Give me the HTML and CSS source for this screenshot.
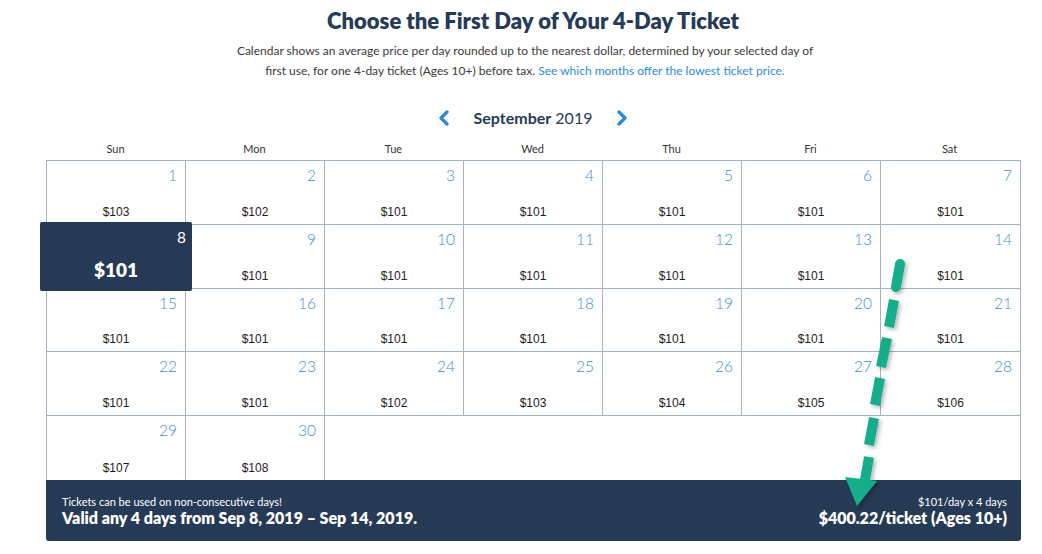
FILE: index.html
```html
<!DOCTYPE html>
<html lang="en">
<head>
<meta charset="utf-8">
<title>Choose the First Day of Your 4-Day Ticket</title>
<link rel="stylesheet" href="styles.css">
</head>
<body>
<main class="page">
  <h1 class="title">Choose the First Day of Your 4-Day Ticket</h1>
  <p class="intro"><span class="intro-line">Calendar shows an average price per day rounded up to the nearest dollar, determined by your selected day of</span><span class="intro-line">first use, for one 4-day ticket (Ages 10+) before tax. <a class="link" href="#">See which months offer the lowest ticket price.</a></span></p>

  <div class="month-nav">
    <svg class="chev" width="12" height="16" viewBox="0 0 12 16"><path d="M9 2 L3 8 L9 14" fill="none" stroke="#2a8ad6" stroke-width="3.2" stroke-linecap="round" stroke-linejoin="round"/></svg>
    <div class="month"><span class="month-name">September</span> 2019</div>
    <svg class="chev" width="12" height="16" viewBox="0 0 12 16"><path d="M3 2 L9 8 L3 14" fill="none" stroke="#2a8ad6" stroke-width="3.2" stroke-linecap="round" stroke-linejoin="round"/></svg>
  </div>

  <div class="weekdays">
    <div>Sun</div><div>Mon</div><div>Tue</div><div>Wed</div><div>Thu</div><div>Fri</div><div>Sat</div>
  </div>

  <div class="calendar">
    <div class="cell"><span class="num">1</span><span class="price">$103</span></div>
    <div class="cell"><span class="num">2</span><span class="price">$102</span></div>
    <div class="cell"><span class="num">3</span><span class="price">$101</span></div>
    <div class="cell"><span class="num">4</span><span class="price">$101</span></div>
    <div class="cell"><span class="num">5</span><span class="price">$101</span></div>
    <div class="cell"><span class="num">6</span><span class="price">$101</span></div>
    <div class="cell last-col"><span class="num">7</span><span class="price">$101</span></div>

    <div class="cell selected-cell"><div class="selected"><span class="num">8</span><span class="price">$101</span></div></div>
    <div class="cell"><span class="num">9</span><span class="price">$101</span></div>
    <div class="cell"><span class="num">10</span><span class="price">$101</span></div>
    <div class="cell"><span class="num">11</span><span class="price">$101</span></div>
    <div class="cell"><span class="num">12</span><span class="price">$101</span></div>
    <div class="cell"><span class="num">13</span><span class="price">$101</span></div>
    <div class="cell last-col"><span class="num">14</span><span class="price">$101</span></div>

    <div class="cell"><span class="num">15</span><span class="price">$101</span></div>
    <div class="cell"><span class="num">16</span><span class="price">$101</span></div>
    <div class="cell"><span class="num">17</span><span class="price">$101</span></div>
    <div class="cell"><span class="num">18</span><span class="price">$101</span></div>
    <div class="cell"><span class="num">19</span><span class="price">$101</span></div>
    <div class="cell"><span class="num">20</span><span class="price">$101</span></div>
    <div class="cell last-col"><span class="num">21</span><span class="price">$101</span></div>

    <div class="cell"><span class="num">22</span><span class="price">$101</span></div>
    <div class="cell"><span class="num">23</span><span class="price">$101</span></div>
    <div class="cell"><span class="num">24</span><span class="price">$102</span></div>
    <div class="cell"><span class="num">25</span><span class="price">$103</span></div>
    <div class="cell"><span class="num">26</span><span class="price">$104</span></div>
    <div class="cell"><span class="num">27</span><span class="price">$105</span></div>
    <div class="cell last-col"><span class="num">28</span><span class="price">$106</span></div>

    <div class="cell last-row"><span class="num">29</span><span class="price">$107</span></div>
    <div class="cell last-row"><span class="num">30</span><span class="price">$108</span></div>
  </div>

  <footer class="summary">
    <div class="summary-left">
      <div class="small">Tickets can be used on non-consecutive days!</div>
      <div class="big">Valid any 4 days from Sep 8, 2019 – Sep 14, 2019.</div>
    </div>
    <div class="summary-right">
      <div class="small">$101/day x 4 days</div>
      <div class="big">$400.22/ticket (Ages 10+)</div>
    </div>
  </footer>
</main>

<svg class="arrow" width="1042" height="554" viewBox="0 0 1042 554">
  <defs>
    <filter id="sh" x="-50%" y="-10%" width="200%" height="120%">
      <feDropShadow dx="2" dy="2" stdDeviation="2" flood-color="#000" flood-opacity="0.3"/>
    </filter>
  </defs>
  <g filter="url(#sh)" fill="#13ad8b" stroke="none">
    <line x1="900" y1="264" x2="896" y2="287" stroke="#13ad8b" stroke-width="10" stroke-linecap="round"/>
    <line x1="894" y1="300" x2="889" y2="327" stroke="#13ad8b" stroke-width="10"/>
    <line x1="887" y1="338" x2="881" y2="367" stroke="#13ad8b" stroke-width="10"/>
    <line x1="880" y1="378" x2="875" y2="405" stroke="#13ad8b" stroke-width="10"/>
    <line x1="874" y1="418" x2="869" y2="445" stroke="#13ad8b" stroke-width="10"/>
    <line x1="869" y1="457" x2="865" y2="480" stroke="#13ad8b" stroke-width="10"/>
    <polygon points="845,477 877,481 857,506"/>
  </g>
</svg>
</body>
</html>
```

FILE: styles.css
```css
html, body {
  margin: 0;
  padding: 0;
  background: #ffffff;
}

body {
  position: relative;
  width: 1042px;
  height: 554px;
  overflow: hidden;
  font-family: Lato, "Open Sans", sans-serif;
  color: #333;
}

.page {
  width: 974px;
  margin-left: 46px;
  padding-top: 8px;
}

.title {
  margin: 0;
  text-align: center;
  font-size: 22px;
  line-height: 26px;
  font-weight: 800;
  color: #253b56;
}

.intro {
  width: 600px;
  margin: 7px 0 0 179px;
  text-align: center;
  font-size: 12px;
  line-height: 20px;
  color: #3a3a3a;
}

.intro-line {
  display: block;
  white-space: nowrap;
}

.link {
  color: #2e8ad8;
  text-decoration: none;
}

.month-nav {
  display: flex;
  align-items: center;
  justify-content: center;
  gap: 24px;
  margin-top: 26px;
  height: 22px;
}

.month {
  font-size: 16px;
  line-height: 20px;
  color: #253b56;
  white-space: nowrap;
}

.month-name {
  font-weight: 700;
}

.weekdays {
  display: grid;
  grid-template-columns: repeat(7, 139px);
  margin-top: 7px;
  height: 24px;
  align-items: center;
  font-size: 11px;
  color: #333;
  text-align: center;
}

.calendar {
  display: grid;
  grid-template-columns: repeat(7, 139px);
  grid-auto-rows: 63.75px;
  border: 1px solid #a3b1c4;
  border-bottom: none;
  width: 973px;
}

.cell {
  position: relative;
  display: flex;
  flex-direction: column;
  border-right: 1px solid #a3b1c4;
  border-bottom: 1px solid #a3b1c4;
  box-sizing: border-box;
}

.cell.last-col {
  border-right: none;
}

.cell.last-row {
  border-bottom: none;
}

.num {
  align-self: flex-end;
  margin: 5px 8px 0 0;
  font-size: 15.5px;
  line-height: 18px;
  font-weight: 300;
  color: #3a8fd8;
}

.price {
  margin-top: auto;
  margin-bottom: 4px;
  text-align: center;
  font-family: "Liberation Sans", Arial, sans-serif;
  font-size: 12px;
  line-height: 16px;
  color: #1d1d1d;
}

.selected {
  position: absolute;
  left: -7px;
  right: -7px;
  top: -3px;
  bottom: -3px;
  z-index: 2;
  display: flex;
  flex-direction: column;
  background: #263a56;
  border-radius: 2px;
}

.selected .num {
  color: #ffffff;
  font-weight: 400;
  margin: 6px 6px 0 0;
}

.selected .price {
  color: #ffffff;
  font-family: Lato, sans-serif;
  font-weight: 800;
  font-size: 19px;
  line-height: 22px;
  margin-bottom: 10px;
  margin-top: auto;
}

.summary {
  display: flex;
  justify-content: space-between;
  align-items: flex-end;
  width: 975px;
  height: 61px;
  box-sizing: border-box;
  padding: 0 14px 14px 16px;
  background: #263a56;
  color: #ffffff;
  border-radius: 0 0 3px 3px;
}

.summary-right {
  text-align: right;
}

.small {
  font-size: 11px;
  line-height: 14px;
}

.big {
  font-size: 16px;
  line-height: 18px;
  font-weight: 800;
}

.arrow {
  position: absolute;
  left: 0;
  top: 0;
  pointer-events: none;
  z-index: 5;
}
```
